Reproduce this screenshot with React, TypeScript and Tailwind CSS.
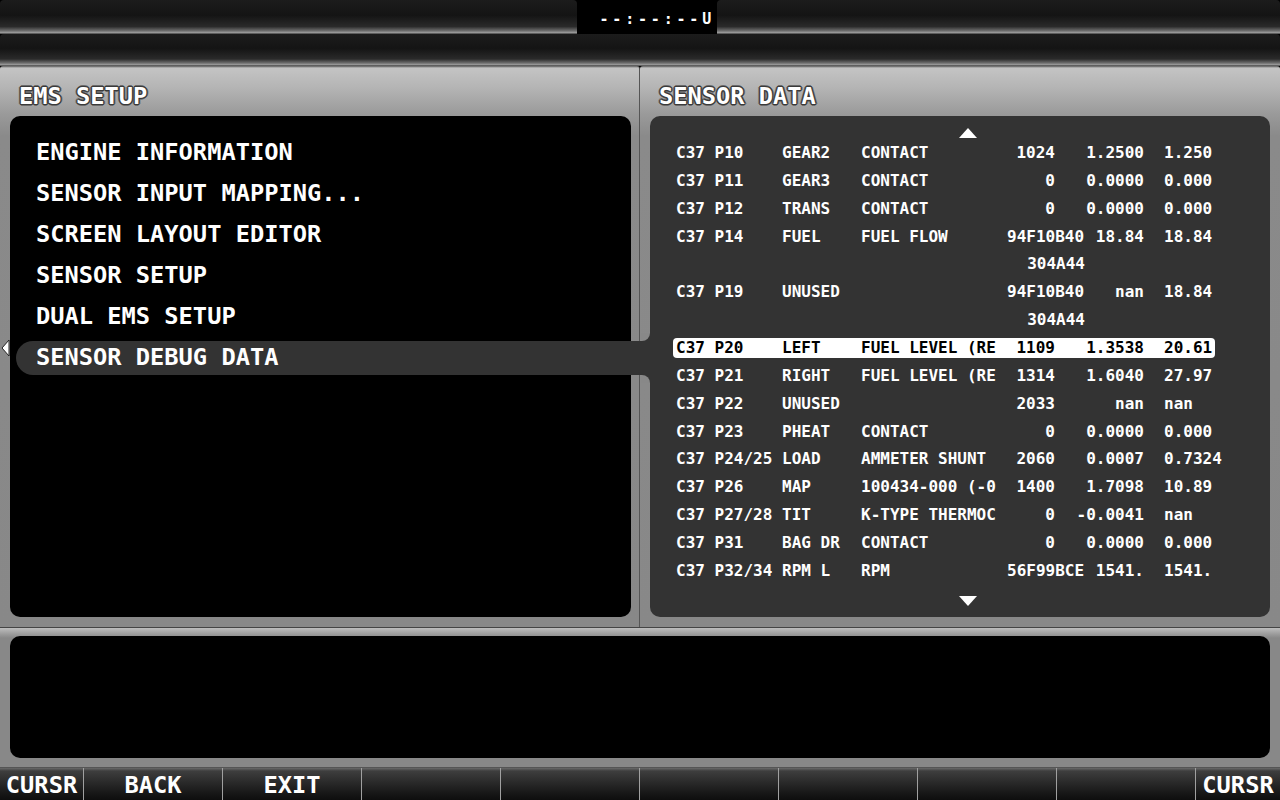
import React from "react";

type Row = {
  c1?: string;
  c2?: string;
  c3?: string;
  c4?: string;
  c5?: string;
  c6?: string;
  cont?: string;
  selected?: boolean;
};

const rows: Row[] = [
  { c1: "C37 P10", c2: "GEAR2", c3: "CONTACT", c4: "1024", c5: "1.2500", c6: "1.250" },
  { c1: "C37 P11", c2: "GEAR3", c3: "CONTACT", c4: "0", c5: "0.0000", c6: "0.000" },
  { c1: "C37 P12", c2: "TRANS", c3: "CONTACT", c4: "0", c5: "0.0000", c6: "0.000" },
  { c1: "C37 P14", c2: "FUEL", c3: "FUEL FLOW", c4: "94F10B40", c5: "18.84", c6: "18.84" },
  { cont: "304A44" },
  { c1: "C37 P19", c2: "UNUSED", c3: "", c4: "94F10B40", c5: "nan", c6: "18.84" },
  { cont: "304A44" },
  { c1: "C37 P20", c2: "LEFT", c3: "FUEL LEVEL (RE", c4: "1109", c5: "1.3538", c6: "20.61", selected: true },
  { c1: "C37 P21", c2: "RIGHT", c3: "FUEL LEVEL (RE", c4: "1314", c5: "1.6040", c6: "27.97" },
  { c1: "C37 P22", c2: "UNUSED", c3: "", c4: "2033", c5: "nan", c6: "nan" },
  { c1: "C37 P23", c2: "PHEAT", c3: "CONTACT", c4: "0", c5: "0.0000", c6: "0.000" },
  { c1: "C37 P24/25", c2: "LOAD", c3: "AMMETER SHUNT", c4: "2060", c5: "0.0007", c6: "0.7324" },
  { c1: "C37 P26", c2: "MAP", c3: "100434-000 (-0", c4: "1400", c5: "1.7098", c6: "10.89" },
  { c1: "C37 P27/28", c2: "TIT", c3: "K-TYPE THERMOC", c4: "0", c5: "-0.0041", c6: "nan" },
  { c1: "C37 P31", c2: "BAG DR", c3: "CONTACT", c4: "0", c5: "0.0000", c6: "0.000" },
  { c1: "C37 P32/34", c2: "RPM L", c3: "RPM", c4: "56F99BCE", c5: "1541.", c6: "1541." },
];

const menu = [
  "ENGINE INFORMATION",
  "SENSOR INPUT MAPPING...",
  "SCREEN LAYOUT EDITOR",
  "SENSOR SETUP",
  "DUAL EMS SETUP",
  "SENSOR DEBUG DATA",
];

const buttons = ["CURSR", "BACK", "EXIT", "", "", "", "", "", "", "CURSR"];

const barBg =
  "bg-[linear-gradient(to_bottom,#1c1c1c_0%,#141414_45%,#2a2a2a_78%,#6a6a6a_90%,#9a9a9a_96%,#3a3a3a_100%)]";
const panelBg =
  "bg-[linear-gradient(to_bottom,#5a5a5a_0px,#c4c4c4_2px,#b4b4b4_22px,#9a9a9a_48px,#8a8a8a_70px,#888888_100%)]";
const outlined =
  "[text-shadow:-1px_-1px_0_#3a3a3a,1px_-1px_0_#3a3a3a,-1px_1px_0_#3a3a3a,1px_1px_0_#3a3a3a,0_-2px_0_#6a6a6a,0_2px_0_#6a6a6a,-2px_0_0_#6a6a6a,2px_0_0_#6a6a6a]";

function TriUp() {
  return (
    <svg width="18" height="10" viewBox="0 0 18 10">
      <polygon points="9,0 18,10 0,10" fill="#fff" />
    </svg>
  );
}

function TriDown() {
  return (
    <svg width="18" height="10" viewBox="0 0 18 10">
      <polygon points="0,0 18,0 9,10" fill="#fff" />
    </svg>
  );
}

function DataRow({ row }: { row: Row }) {
  if (row.cont) {
    return (
      <div className="flex h-[27.87px] items-center pl-[26px]">
        <div className="flex h-[20px] items-center">
          <span className="w-[331px]" />
          <span className="w-[78px] text-right">{row.cont}</span>
        </div>
      </div>
    );
  }
  return (
    <div className="flex h-[27.87px] items-center pl-[23px]">
      <div
        className={`flex h-[20px] w-[542px] items-center whitespace-pre rounded-[4px] pl-[3px] ${
          row.selected ? "bg-white text-black" : ""
        }`}
      >
        <span className="w-[106px] shrink-0">{row.c1}</span>
        <span className="w-[79px] shrink-0">{row.c2}</span>
        <span className="w-[146px] shrink-0">{row.c3}</span>
        <span className="w-[48px] shrink-0 text-right">{row.c4}</span>
        <span className="w-[89px] shrink-0 text-right">{row.c5}</span>
        <span className="shrink-0 pl-[20px]">{row.c6}</span>
      </div>
    </div>
  );
}

export default function App() {
  return (
    <div className="flex h-[800px] w-[1280px] flex-col overflow-hidden bg-black font-['DejaVu_Sans_Mono',monospace] font-bold text-white">
      {/* status bar */}
      <div className="flex h-[34px]">
        <div className={`w-[577px] rounded-t-[4px] ${barBg}`} />
        <div className="flex w-[140px] items-center justify-end bg-black pr-[2px] pt-[4px] text-[15px] tracking-[3.8px] text-white">
          --:--:--U
        </div>
        <div className={`flex-1 rounded-t-[4px] ${barBg}`} />
      </div>
      <div className={`h-[32px] rounded-t-[4px] ${barBg}`} />

      {/* main panels */}
      <div className="flex h-[561px]">
        {/* left panel */}
        <div className={`relative flex w-[640px] flex-col rounded-t-[3px] border-r border-[#555] pl-[10px] pr-[8px] pb-[10px] ${panelBg}`}>
          <div className={`flex h-[50px] items-center pl-[9px] pt-[11px] text-[23.7px] ${outlined}`}>EMS SETUP</div>
          <div className="flex flex-1 flex-col gap-[7px] rounded-[10px] bg-black pt-[20px]">
            {menu.map((m, i) =>
              i === menu.length - 1 ? (
                <div
                  key={m}
                  className="relative z-10 -mr-[19px] ml-[6px] flex h-[34px] items-center rounded-l-[17px] bg-[#333333] pl-[20px] text-[23.7px]"
                >
                  {m}
                  <div className="absolute -top-[8px] right-0 h-[8px] w-[9px] bg-[#333333]">
                    <div className="h-full w-full rounded-br-[9px] bg-[#888888]" />
                  </div>
                  <div className="absolute -bottom-[8px] right-0 h-[8px] w-[9px] bg-[#333333]">
                    <div className="h-full w-full rounded-tr-[9px] bg-[#888888]" />
                  </div>
                </div>
              ) : (
                <div key={m} className="flex h-[34px] items-center pl-[26px] text-[23.7px]">
                  {m}
                </div>
              )
            )}
          </div>
          <svg className="absolute left-[1px] top-[273px]" width="9" height="18" viewBox="0 0 9 18">
            <polygon points="8,1 8,17 1,9" fill="#fff" stroke="#222" strokeWidth="1" />
          </svg>
        </div>

        {/* right panel */}
        <div className={`flex w-[640px] flex-col rounded-t-[3px] px-[10px] pb-[10px] ${panelBg}`}>
          <div className={`flex h-[50px] items-center pl-[9px] pt-[11px] text-[23.7px] ${outlined}`}>SENSOR DATA</div>
          <div className="flex flex-1 flex-col rounded-[10px] bg-[#333333] pt-[12px] text-[16px]">
            <div className="flex h-[11px] items-start justify-center pl-[16px]">
              <TriUp />
            </div>
            {rows.map((r, i) => (
              <DataRow key={i} row={r} />
            ))}
            <div className="mt-[11px] flex h-[11px] items-start justify-center pl-[16px]">
              <TriDown />
            </div>
          </div>
        </div>
      </div>

      {/* message panel */}
      <div className="flex h-[140px] flex-col border-t border-[#444] bg-[linear-gradient(to_bottom,#bdbdbd_0px,#9c9c9c_6px,#888888_10px,#888888_100%)] px-[10px] pb-[9px] pt-[8px]">
        <div className="flex-1 rounded-[10px] bg-black" />
      </div>

      {/* soft keys */}
      <div className="flex h-[33px] border-t border-[#555]">
        {buttons.map((b, i) => (
          <div
            key={i}
            className={`flex items-center justify-center bg-[linear-gradient(to_bottom,#6a6a6a_0px,#3e3e3e_3px,#2e2e2e_12px,#161616_26px,#0e0e0e_100%)] text-[23.7px] leading-none ${
              i === 0 ? "w-[83px]" : i === buttons.length - 1 ? "flex-1" : "w-[139px]"
            } ${i > 0 ? "border-l border-[#a0a0a0]" : ""}`}
          >
            <span className="pt-[3px]">{b}</span>
          </div>
        ))}
      </div>
    </div>
  );
}
